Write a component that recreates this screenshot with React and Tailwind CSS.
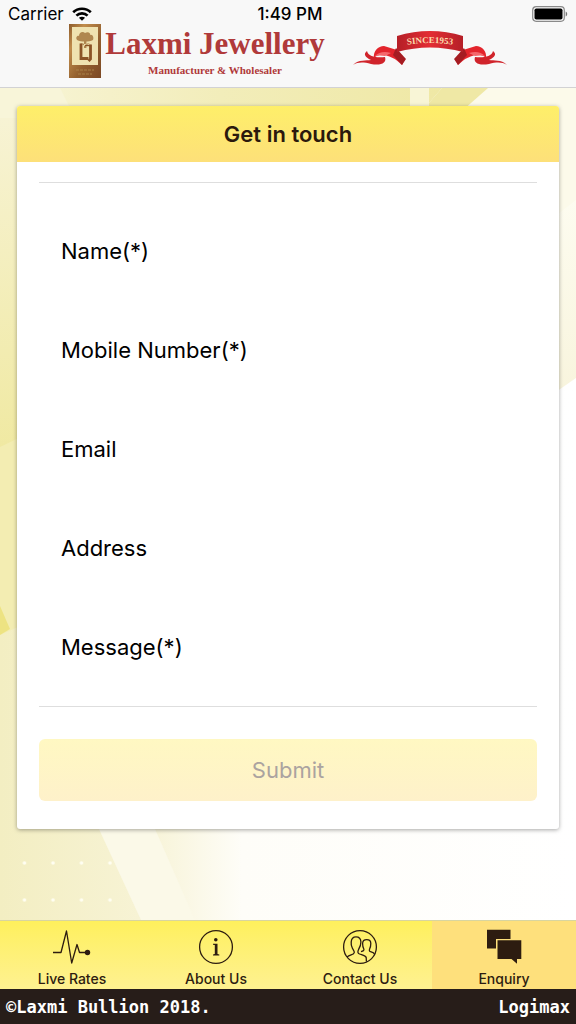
import React from "react";

const fields = [
  { id: "name", label: "Name(*)", type: "text" },
  { id: "mobile", label: "Mobile Number(*)", type: "tel" },
  { id: "email", label: "Email", type: "email" },
  { id: "address", label: "Address", type: "text" },
  { id: "message", label: "Message(*)", type: "text" },
];

function WifiIcon() {
  return (
    <svg viewBox="0 0 20 14" className="h-3.5 w-5" aria-hidden="true">
      <g fill="none" stroke="#000" strokeWidth="2.7">
        <path d="M1.2 5.2C6 .6 14 .6 18.8 5.2" />
        <path d="M4.4 8.6C7.5 5.6 12.5 5.6 15.6 8.6" />
      </g>
      <path d="M10 13.8 6.9 10.8C8.6 9.4 11.4 9.4 13.1 10.8Z" />
    </svg>
  );
}

function BatteryIcon() {
  return (
    <svg viewBox="0 0 36 16" className="h-4 w-9" aria-hidden="true">
      <rect x=".7" y=".7" width="31.6" height="14.6" rx="3.5" fill="none" stroke="#8a8a8a" strokeWidth="1.2" />
      <rect x="2.5" y="2.5" width="28" height="11" rx="1.8" />
      <path d="M33.7 5.5c2 .8 2 4.2 0 5z" fill="#777" />
    </svg>
  );
}

function Emblem() {
  return (
    <svg viewBox="0 0 32 54" className="h-[54px] w-8 shrink-0" aria-hidden="true">
      <defs>
        <linearGradient id="gold" x1="0" y1="0" x2="1" y2="1">
          <stop offset="0" stopColor="#8d5c2c" />
          <stop offset=".25" stopColor="#c08c4c" />
          <stop offset=".6" stopColor="#93602f" />
          <stop offset="1" stopColor="#7b4824" />
        </linearGradient>
      </defs>
      <rect width="32" height="54" fill="url(#gold)" />
      <rect x="3" y="3" width="26" height="38" fill="#efe2b0" />
      <g fill="#b08750">
        <path d="M8 16c-2-3 1-5 2-4 0-4 4-5 6-3 3-2 6 0 5 2 3-1 4 3 3 5-4 2-12 2-16 0z" />
        <path d="M15 14h2.4v10H15zM11 19l5 3 5-3-5 1z" />
      </g>
      <g fill="none" stroke="#8b5426" strokeWidth="2.8">
        <path d="M12 19.5v15h7.5" />
        <path d="M21.5 20.5v14.5l-2 2" />
        <path d="M16 21.5h6" strokeWidth="1.4" />
      </g>
      <path d="M7 46h18M9 50h14" stroke="#a98248" strokeWidth="1" strokeDasharray="3 1" />
    </svg>
  );
}

function Ribbon() {
  return (
    <svg viewBox="0 0 154 38" className="h-[38px] w-[154px] shrink-0" role="img" aria-label="Since 1953">
      <defs>
        <linearGradient id="band">
          <stop offset="0" stopColor="#b51f27" />
          <stop offset=".5" stopColor="#e32d34" />
          <stop offset="1" stopColor="#b51f27" />
        </linearGradient>
        <path id="arc" d="M43 17Q77 9 111 17" />
        <g id="tail">
          <path d="M0 35C6 29 13 31 18 30 12 27 10 24 14 21 15 27 25 28 32 27 34 33 28 36 18 34 10 32 5 32 0 35Z" fill="#d0242b" />
          <path d="M21 28C20 21 25 16 31 16L44 20 52 29 49 35Q41 27 32 25 25 24 21 28Z" fill="#e3252c" />
          <path d="M43 18 53 29 49 35 40 25Z" fill="#a51c22" />
          <path d="M22 26Q28 20 38 23L32 26Q26 25 22 26Z" fill="#f4686b" />
        </g>
      </defs>
      <use href="#tail" />
      <use href="#tail" transform="matrix(-1 0 0 1 154 0)" />
      <path d="M44 6Q77-4 110 6V22Q77 13 44 22Z" fill="url(#band)" />
      <text fill="#fbdcae" fontFamily="Liberation Serif, serif" fontSize="9" fontWeight="bold" textAnchor="middle">
        <textPath href="#arc" startOffset="50%">SINCE1953</textPath>
      </text>
    </svg>
  );
}

function Backdrop() {
  return (
    <svg viewBox="0 0 576 832" preserveAspectRatio="none" className="absolute inset-0 h-full w-full" aria-hidden="true">
      <defs>
        <linearGradient id="base">
          <stop offset="0" stopColor="#f3eec2" />
          <stop offset=".25" stopColor="#f7f3d5" />
          <stop offset=".42" stopColor="#fefdf8" />
          <stop offset="1" stopColor="#fff" />
        </linearGradient>
        <linearGradient id="top">
          <stop offset="0" stopColor="#f8f5d8" />
          <stop offset=".5" stopColor="#f2edba" />
          <stop offset="1" stopColor="#efe8a5" />
        </linearGradient>
        <linearGradient id="left" x1="0" y1="0" x2="0" y2="1">
          <stop offset="0" stopColor="#f7f3d4" />
          <stop offset="1" stopColor="#f0e9a2" />
        </linearGradient>
        <linearGradient id="right" x1="0" y1="0" x2="0" y2="1">
          <stop offset="0" stopColor="#fdfcf0" />
          <stop offset="1" stopColor="#f8f4dc" />
        </linearGradient>
        <pattern id="dots" x="10.5" y="10" width="28.5" height="37" patternUnits="userSpaceOnUse">
          <circle cx="14" cy="25" r="1.8" fill="#fffef2" />
        </pattern>
      </defs>
      <rect width="576" height="832" fill="url(#base)" />
      <path d="M420 0H576V120L540 140H420Z" fill="#fcfaea" />
      <path d="M540 140 576 112V290L540 315Z" fill="url(#right)" />
      <path d="M0 0H442L390 60H0Z" fill="url(#top)" />
      <path d="M442 0H488L420 60H390Z" fill="#efe8a5" />
      <path d="M60 0 80 40H0V0Z" fill="#f8f5d9" />
      <path d="M410 0h19v40h-19z" fill="#f8f5d6" />
      <path d="M0 30H60V330L0 362Z" fill="url(#left)" />
      <path d="M0 359 60 330V520L0 547Z" fill="#f3edb2" />
      <path d="M0 518 10 541 0 547Z" fill="#ede382" />
      <path d="M80 700H137L195 832H141Z" fill="#fbf9e8" />
      <path d="M0 763H125V832H0Z" fill="url(#dots)" />
    </svg>
  );
}

function PulseIcon() {
  return (
    <svg viewBox="0 0 36 36" className="size-9 overflow-visible" fill="none" stroke="#2d1c10" strokeWidth="1.3" strokeLinejoin="round" aria-hidden="true">
      <path d="M-1 23.5H7L12.5 2 17.7 34 23 15.5 25.5 23.5H33" />
      <circle cx="33.5" cy="23.5" r="2.7" fill="#2d1c10" stroke="none" />
    </svg>
  );
}

function InfoIcon() {
  return (
    <svg viewBox="0 0 36 36" className="size-9" aria-hidden="true">
      <circle cx="18" cy="18" r="16.4" fill="none" stroke="#2d1c10" strokeWidth="1.3" />
      <circle cx="17.8" cy="10.8" r="1.8" fill="#2d1c10" />
      <path d="M15 14.8H19.5V25L21.3 25.4V26.4H15V25.4L16.8 25V16L15 15.7Z" fill="#2d1c10" />
    </svg>
  );
}

function PeopleIcon() {
  return (
    <svg viewBox="0 0 36 36" className="size-9" fill="none" stroke="#2d1c10" strokeWidth="1.3" strokeLinejoin="round" aria-hidden="true">
      <circle cx="18" cy="18" r="16.4" />
      <path d="M5 28C8 25.5 12 26 12.3 23.5 12.4 22 11.2 21 10.3 19 9.2 17 9 15 9.2 13 9.4 9.5 11.5 7.8 14 7.8S18.8 9.5 18.9 13C19 16 17.8 18.5 16.5 20.7 15.5 22.5 15.7 24.3 17.5 25 20 26 23.5 26.5 24.2 28.5L24.4 32.7" />
      <path d="M19 22.6C21 22 22.5 21.5 21.8 20 20.8 18.2 20.6 16.5 20.6 14.5 20.7 12 22.3 10.7 24.7 10.7S28.8 12 28.8 14.5C28.8 17 28.4 18.5 27.6 20 26.9 22 27.7 22.4 29.2 22.9 30.7 23.4 31.8 23.8 32.4 25" />
    </svg>
  );
}

function ChatIcon() {
  return (
    <svg viewBox="0 0 36 36" className="size-9" fill="#2d1c10" aria-hidden="true">
      <path d="M1 .8H24.5V10H10V19.5H1Z" />
      <path d="M11.5 11.3H35.3V30H31V34.8L25.5 30H11.5Z" />
    </svg>
  );
}

const tabs = [
  { label: "Live Rates", Icon: PulseIcon },
  { label: "About Us", Icon: InfoIcon },
  { label: "Contact Us", Icon: PeopleIcon },
  { label: "Enquiry", Icon: ChatIcon, active: true },
];

export default function App() {
  return (
    <div className="flex min-h-screen flex-col bg-white font-['Inter',sans-serif] text-black">
      <header className="border-b border-[#d2d2d4] bg-[#f8f8f8]">
        <div className="grid h-6 grid-cols-3 items-center px-2 pt-1 text-[17px] leading-5">
          <div className="flex items-center gap-2">
            <span>Carrier</span>
            <WifiIcon />
          </div>
          <div className="pl-1 text-center font-medium">1:49 PM</div>
          <div className="flex justify-end">
            <BatteryIcon />
          </div>
        </div>
        <div className="flex h-[63px] items-start justify-center">
          <Emblem />
          <div className="ml-1 flex flex-col items-center font-['Liberation_Serif',serif] font-bold text-[#b03a3a]">
            <h1 className="text-[31px] leading-10">Laxmi Jewellery</h1>
            <p className="text-[11px] leading-3">Manufacturer &amp; Wholesaler</p>
          </div>
          <div className="ml-7 pt-1.5">
            <Ribbon />
          </div>
        </div>
      </header>

      <main className="relative flex-1 overflow-hidden px-[17px] py-[18px]">
        <Backdrop />
        <section className="relative rounded-[3px] bg-white shadow-[0_1px_4px_rgba(0,0,0,0.35)]">
          <h2 className="rounded-t-[3px] bg-linear-to-b from-[#feef69] to-[#fde079] py-3.5 text-center text-[22px] leading-7 font-semibold text-[#2b190d]">
            Get in touch
          </h2>
          <form className="px-[22px] pt-5 pb-7">
            <div className="border-y border-[#dedede] px-[22px] pt-4 pb-3">
              {fields.map((field) => (
                <div key={field.id} className="flex h-[99px] flex-col pt-9">
                  <label htmlFor={field.id} className="text-[22px] leading-8">
                    {field.label}
                  </label>
                  <input id={field.id} type={field.type} className="h-6 w-full bg-transparent text-lg outline-none" />
                </div>
              ))}
            </div>
            <button
              type="submit"
              disabled
              className="mt-8 h-[62px] w-full rounded-md bg-linear-to-b from-[#fff8c2] to-[#fef1ca] text-[22px] text-[#aba3a0]"
            >
              Submit
            </button>
          </form>
        </section>
      </main>

      <nav className="grid h-[69px] grid-cols-4 border-t border-[#d8d5a0] bg-linear-to-b from-[#fef05c] to-[#fef190]">
        {tabs.map(({ label, Icon, active }) => (
          <a
            key={label}
            href="#"
            aria-current={active ? "page" : undefined}
            className={`flex flex-col items-center pt-2 text-[14px] leading-7 font-medium text-[#2d1c10] ${active ? "bg-[#fee07c]" : ""}`}
          >
            <Icon />
            <span>{label}</span>
          </a>
        ))}
      </nav>
      <footer className="flex h-[35px] items-center justify-between bg-[#271d19] px-1.5 pt-0.5 font-['DejaVu_Sans_Mono',monospace] text-[17px] font-bold text-white">
        <span>©Laxmi Bullion 2018.</span>
        <span>Logimax</span>
      </footer>
    </div>
  );
}
